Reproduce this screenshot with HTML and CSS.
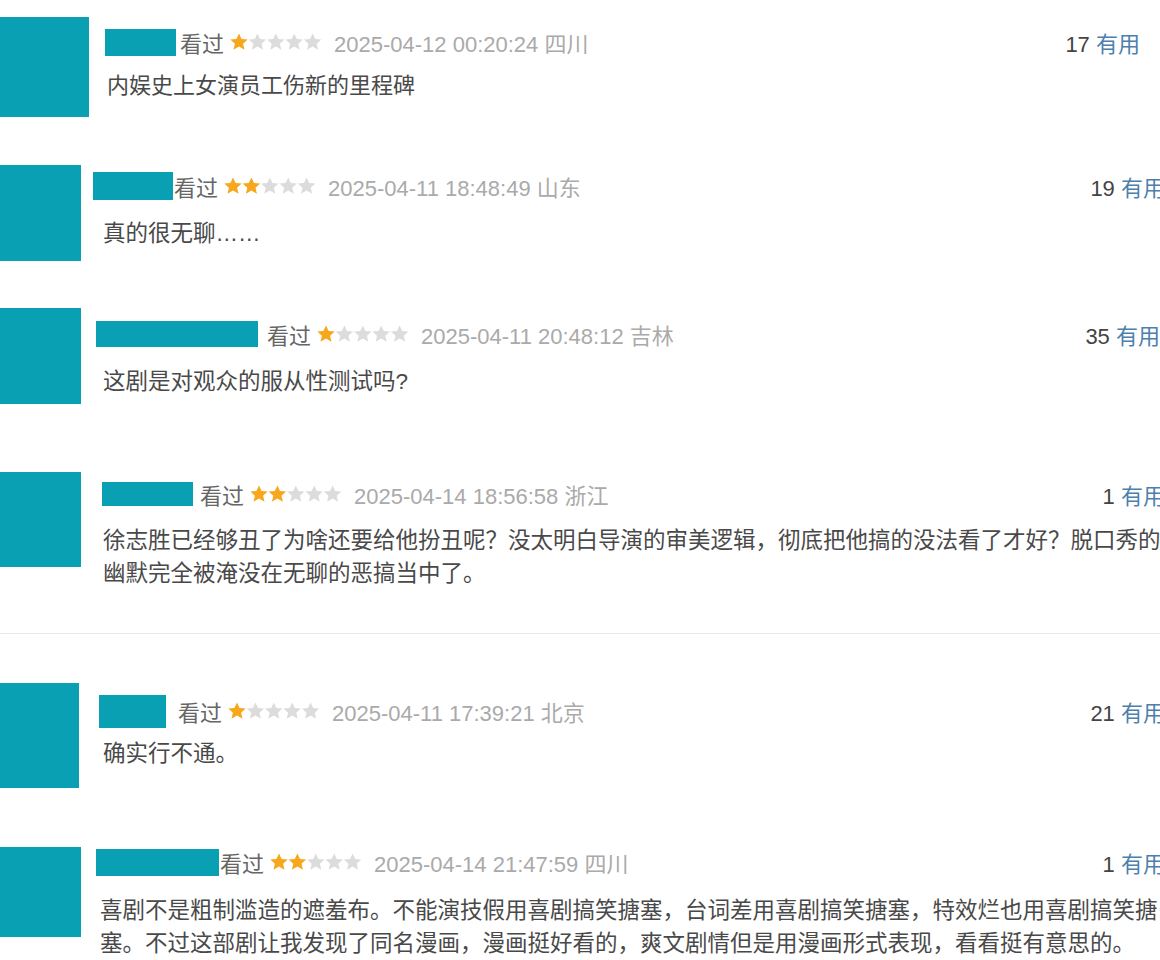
FILE: index.html
```html
<!DOCTYPE html>
<html lang="zh-CN">
<head>
  <meta charset="UTF-8" />
  <title>短评</title>
  <link rel="stylesheet" href="styles.css">
</head>
<body>
  <div class="list">

    <div class="comment c1">
      <div class="avatar"></div>
      <div class="main">
        <div class="meta">
          <span class="name"></span>
          <span class="watched">看过</span>
          <span class="stars r1"></span>
          <span class="time">2025-04-12 00:20:24 四川</span>
          <span class="votes"><b>17</b> <a href="#">有用</a></span>
        </div>
        <p class="text">内娱史上女演员工伤新的里程碑</p>
      </div>
    </div>

    <div class="comment c2">
      <div class="avatar"></div>
      <div class="main">
        <div class="meta">
          <span class="name"></span>
          <span class="watched">看过</span>
          <span class="stars r2"></span>
          <span class="time">2025-04-11 18:48:49 山东</span>
          <span class="votes"><b>19</b> <a href="#">有用</a></span>
        </div>
        <p class="text">真的很无聊……</p>
      </div>
    </div>

    <div class="comment c3">
      <div class="avatar"></div>
      <div class="main">
        <div class="meta">
          <span class="name"></span>
          <span class="watched">看过</span>
          <span class="stars r1"></span>
          <span class="time">2025-04-11 20:48:12 吉林</span>
          <span class="votes"><b>35</b> <a href="#">有用</a></span>
        </div>
        <p class="text">这剧是对观众的服从性测试吗?</p>
      </div>
    </div>

    <div class="comment c4">
      <div class="avatar"></div>
      <div class="main">
        <div class="meta">
          <span class="name"></span>
          <span class="watched">看过</span>
          <span class="stars r2"></span>
          <span class="time">2025-04-14 18:56:58 浙江</span>
          <span class="votes"><b>1</b> <a href="#">有用</a></span>
        </div>
        <p class="text">徐志胜已经够丑了为啥还要给他扮丑呢？没太明白导演的审美逻辑，彻底把他搞的没法看了才好？脱口秀的<br>幽默完全被淹没在无聊的恶搞当中了。</p>
      </div>
    </div>

    <div class="divider"></div>

    <div class="comment c5">
      <div class="avatar"></div>
      <div class="main">
        <div class="meta">
          <span class="name"></span>
          <span class="watched">看过</span>
          <span class="stars r1"></span>
          <span class="time">2025-04-11 17:39:21 北京</span>
          <span class="votes"><b>21</b> <a href="#">有用</a></span>
        </div>
        <p class="text">确实行不通。</p>
      </div>
    </div>

    <div class="comment c6">
      <div class="avatar"></div>
      <div class="main">
        <div class="meta">
          <span class="name"></span>
          <span class="watched">看过</span>
          <span class="stars r2"></span>
          <span class="time">2025-04-14 21:47:59 四川</span>
          <span class="votes"><b>1</b> <a href="#">有用</a></span>
        </div>
        <p class="text">喜剧不是粗制滥造的遮羞布。不能演技假用喜剧搞笑搪塞，台词差用喜剧搞笑搪塞，特效烂也用喜剧搞笑搪<br>塞。不过这部剧让我发现了同名漫画，漫画挺好看的，爽文剧情但是用漫画形式表现，看看挺有意思的。</p>
      </div>
    </div>

  </div>
</body>
</html>
```

FILE: styles.css
```css
html, body {
  margin: 0;
  background: #fff;
  overflow: hidden;
}
body {
  font-family: "Liberation Sans", "Noto Sans CJK SC", sans-serif;
  font-size: 22px;
  color: #494949;
}
.list {
  padding-top: 17px;
}

/* one comment row, offsets come from the per-row vars below */
.comment {
  display: flex;
  align-items: flex-start;
  height: var(--h);
}
.avatar {
  flex: none;
  width: var(--aw);
  height: var(--ah);
  background: #0aa0b3;
}
.main {
  flex: 1;
  min-width: 0;
  padding-top: var(--my);
  margin-right: var(--mr);
}
.meta {
  display: flex;
  align-items: center;
  height: 30px;
  padding-left: calc(var(--nx) - var(--aw));
  white-space: nowrap;
}
.name {
  flex: none;
  width: var(--nw);
  height: var(--nh);
  background: #0aa0b3;
}
.watched {
  margin-left: var(--wg);
  color: #666;
}
.stars {
  flex: none;
  width: 92px;
  height: 18px;
  margin-left: 6px;
  background-repeat: no-repeat;
}
.stars.r1 {
  background-image: url("data:image/svg+xml,%3Csvg xmlns='http://www.w3.org/2000/svg' width='92' height='18' viewBox='0 0 92 18'%3E%3Cdefs%3E%3Cpath id='s' d='M9 0.4l2.6 5.6 6.1.6-4.6 4.1 1.4 6L9 13.6l-5.5 3.1 1.4-6L0.3 6.6l6.1-.6z'/%3E%3C/defs%3E%3Cuse href='%23s' fill='%23f6a71c'/%3E%3Cuse href='%23s' x='18.4' fill='%23dcdcdc'/%3E%3Cuse href='%23s' x='36.8' fill='%23dcdcdc'/%3E%3Cuse href='%23s' x='55.2' fill='%23dcdcdc'/%3E%3Cuse href='%23s' x='73.6' fill='%23dcdcdc'/%3E%3C/svg%3E");
}
.stars.r2 {
  background-image: url("data:image/svg+xml,%3Csvg xmlns='http://www.w3.org/2000/svg' width='92' height='18' viewBox='0 0 92 18'%3E%3Cdefs%3E%3Cpath id='s' d='M9 0.4l2.6 5.6 6.1.6-4.6 4.1 1.4 6L9 13.6l-5.5 3.1 1.4-6L0.3 6.6l6.1-.6z'/%3E%3C/defs%3E%3Cuse href='%23s' fill='%23f6a71c'/%3E%3Cuse href='%23s' x='18.4' fill='%23f6a71c'/%3E%3Cuse href='%23s' x='36.8' fill='%23dcdcdc'/%3E%3Cuse href='%23s' x='55.2' fill='%23dcdcdc'/%3E%3Cuse href='%23s' x='73.6' fill='%23dcdcdc'/%3E%3C/svg%3E");
}
.time {
  margin-left: 12px;
  color: #aaa;
}
.votes {
  margin-left: auto;
  color: #555;
}
.votes b {
  font-weight: normal;
  color: #444;
}
.votes a {
  color: #4c7fae;
  text-decoration: none;
}
.text {
  margin: var(--ty) 0 0;
  padding-left: calc(var(--tx) - var(--aw));
  font-size: var(--fs, 22.5px);
  line-height: 33px;
  white-space: nowrap;
}

.divider {
  height: 1px;
  background: #e9e9e9;
  margin-bottom: 49px;
}

/* per-row measurements */
.c1 { --h: 148px; --aw: 89px; --ah: 100px; --my: 10px; --nx: 105px; --nw: 71px; --nh: 27px; --wg: 4px; --tx: 107px; --ty: 12px; --mr: 20px; --fs: 22px; }
.c2 { --h: 143px; --aw: 81px; --ah: 96px; --my: 6px; --nx: 93px; --nw: 80px; --nh: 28px; --wg: 1px; --tx: 103px; --ty: 16px; --mr: -5px; }
.c3 { --h: 164px; --aw: 81px; --ah: 96px; --my: 11px; --nx: 96px; --nw: 162px; --nh: 26px; --wg: 9px; --tx: 103px; --ty: 16px; --mr: 0px; }
.c4 { --h: 161px; --aw: 81px; --ah: 95px; --my: 7px; --nx: 102px; --nw: 91px; --nh: 24px; --wg: 7px; --tx: 103px; --ty: 15px; --mr: -5px; }
.c5 { --h: 164px; --aw: 79px; --ah: 105px; --my: 13px; --nx: 99px; --nw: 67px; --nh: 33px; --wg: 12px; --tx: 103px; --ty: 11px; --mr: -5px; }
.c6 { --h: 113px; --aw: 81px; --ah: 90px; --my: 0px; --nx: 96px; --nw: 123px; --nh: 27px; --wg: 1px; --tx: 100px; --ty: 17px; --mr: -5px; }
```
